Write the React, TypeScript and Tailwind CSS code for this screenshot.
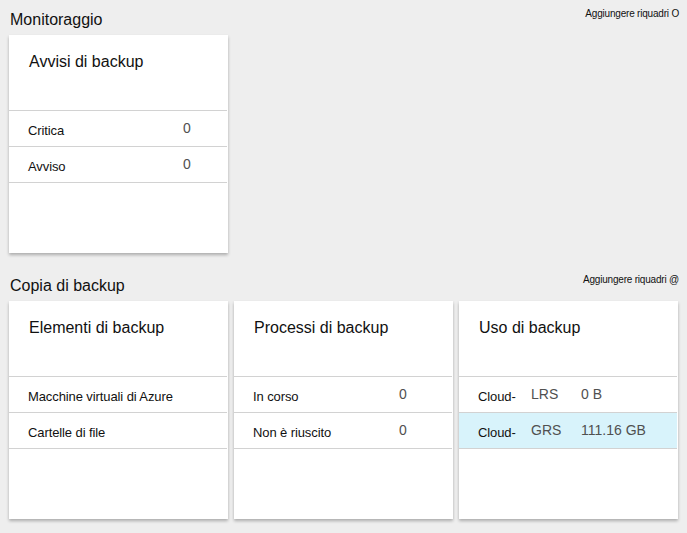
type Row = {
  label: string
  mid?: string
  value: string
  highlight?: boolean
}

type Tile = {
  title: string
  valueCol: string
  midCol?: string
  rows: Row[]
}

const monitoring: Tile[] = [
  {
    title: 'Avvisi di backup',
    valueCol: 'w-[155px]',
    rows: [
      { label: 'Critica', value: '0' },
      { label: 'Avviso', value: '0' },
    ],
  },
]

const backup: Tile[] = [
  {
    title: 'Elementi di backup',
    valueCol: 'w-[155px]',
    rows: [
      { label: 'Macchine virtuali di Azure', value: '' },
      { label: 'Cartelle di file', value: '' },
    ],
  },
  {
    title: 'Processi di backup',
    valueCol: 'w-[146px]',
    rows: [
      { label: 'In corso', value: '0' },
      { label: 'Non è riuscito', value: '0' },
    ],
  },
  {
    title: 'Uso di backup',
    valueCol: 'w-[53px]',
    midCol: 'w-[50px]',
    rows: [
      { label: 'Cloud-', mid: 'LRS', value: '0 B' },
      { label: 'Cloud-', mid: 'GRS', value: '111.16 GB', highlight: true },
    ],
  },
]

function TileCard({ tile }: { tile: Tile }) {
  return (
    <div className="w-[219px] h-[218px] bg-white shadow-[0_2px_3px_rgba(0,0,0,0.28)]">
      <div className="h-[75px] pl-[20px] pt-[17px]">
        <h3 className="text-[16px] leading-[20px] text-[#111]">{tile.title}</h3>
      </div>
      {tile.rows.map((r, i) => {
        const last = i === tile.rows.length - 1
        return (
          <div
            key={i}
            className={`flex items-center pl-[19px] border-t border-[#d2d2d2] mr-[1px] ${
              last ? 'border-b h-[37px]' : 'h-[36px]'
            } ${r.highlight ? 'bg-[#d8f3fb]' : ''}`}
          >
            {tile.midCol ? (
              <>
                <span className="w-[53px] text-[13px] tracking-[-0.1px] text-[#111] mt-[4px]">
                  {r.label}
                </span>
                <span className={`${tile.midCol} text-[14px] text-[#505050]`}>
                  {r.mid}
                </span>
                <span className="text-[14px] text-[#505050]">{r.value}</span>
              </>
            ) : (
              <>
                <span
                  className={`${tile.valueCol} shrink-0 text-[13px] tracking-[-0.1px] text-[#111] mt-[4px]`}
                >
                  {r.label}
                </span>
                <span className="text-[14px] text-[#505050] mt-[-1px]">
                  {r.value}
                </span>
              </>
            )}
          </div>
        )
      })}
    </div>
  )
}

function Section({
  title,
  action,
  tiles,
}: {
  title: string
  action: string
  tiles: Tile[]
}) {
  return (
    <section>
      <div className="flex justify-between items-start pt-[10px] mb-[5px] pl-[1px]">
        <h2 className="text-[16px] leading-[20px] text-[#111]">{title}</h2>
        <span className="text-[10px] leading-[12px] tracking-[-0.2px] text-[#111] mt-[-2px] pr-[2px]">
          {action}
        </span>
      </div>
      <div className="flex gap-[6px]">
        {tiles.map((t) => (
          <TileCard key={t.title} tile={t} />
        ))}
      </div>
    </section>
  )
}

export default function App() {
  return (
    <div
      className="w-[687px] h-[533px] bg-[#eeeeee] pl-[9px] pr-[6px] overflow-hidden"
      style={{ fontFamily: '"Liberation Sans", Arial, sans-serif' }}
    >
      <Section
        title="Monitoraggio"
        action="Aggiungere riquadri O"
        tiles={monitoring}
      />
      <div className="mt-[13px]">
        <Section
          title="Copia di backup"
          action="Aggiungere riquadri @"
          tiles={backup}
        />
      </div>
    </div>
  )
}
